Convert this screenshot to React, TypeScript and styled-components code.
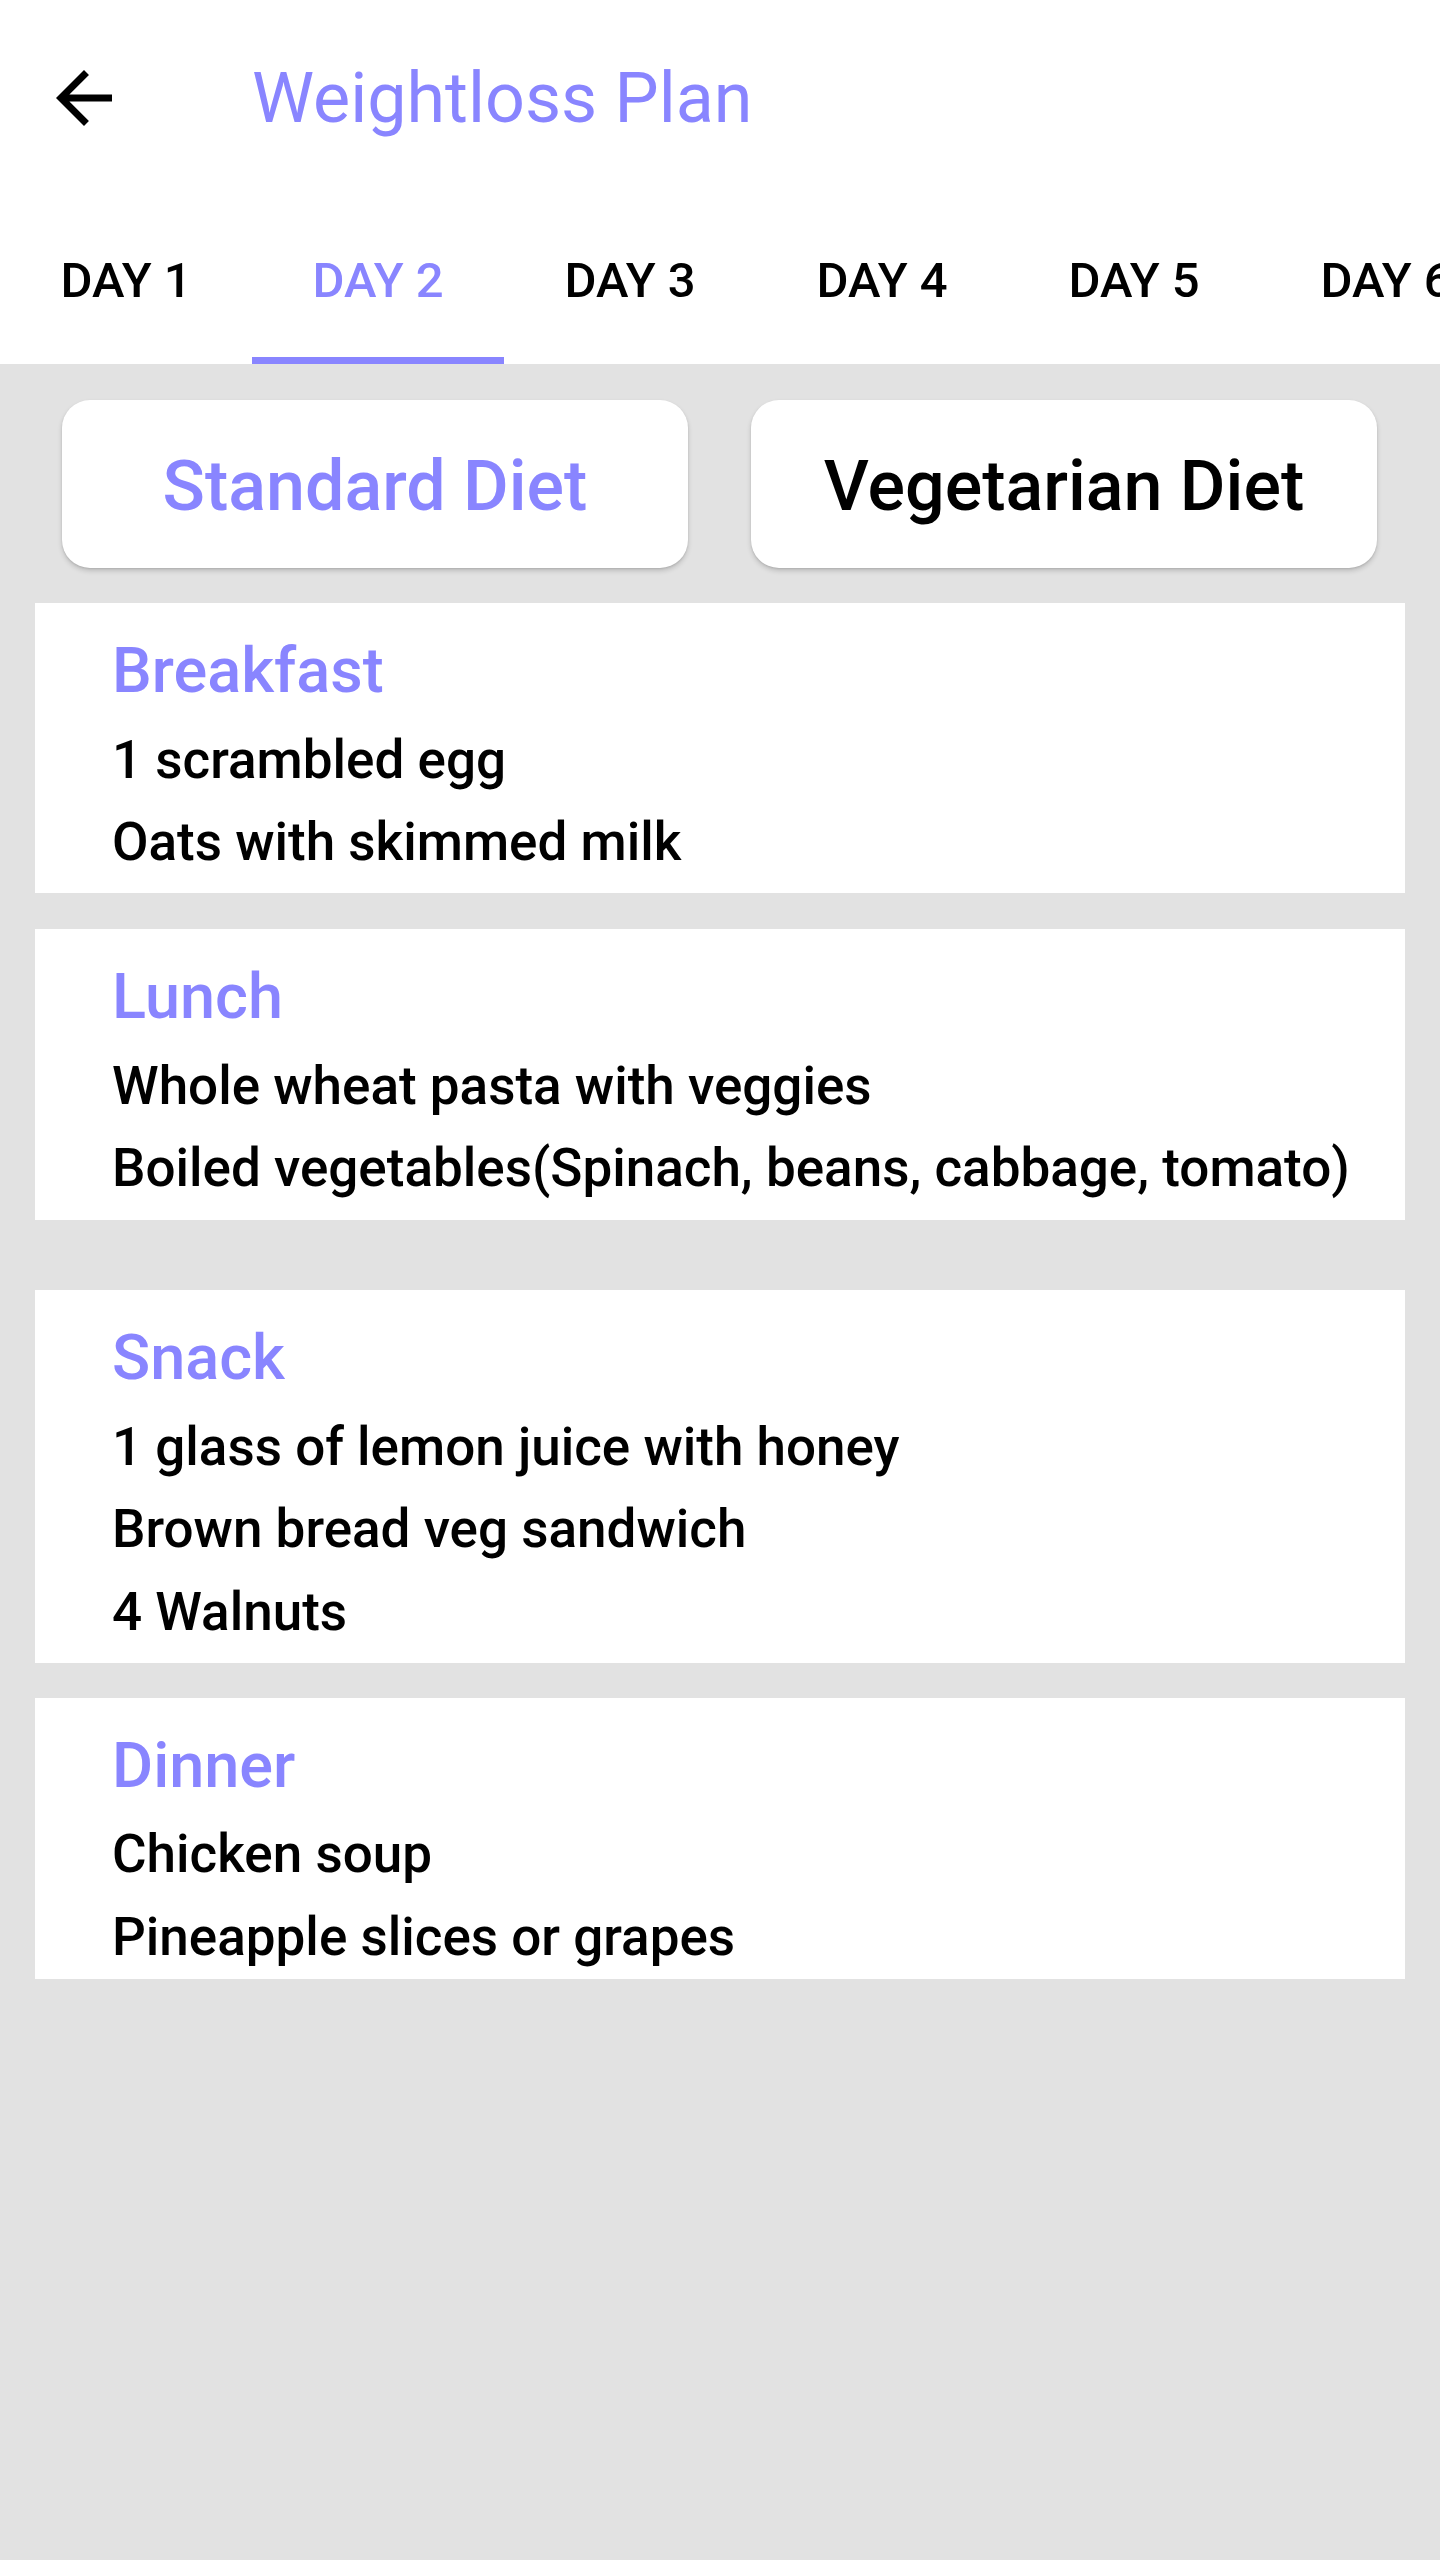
import React, { useState } from 'react';
import styled, { createGlobalStyle } from 'styled-components';

const PURPLE = '#8985ff';
const GREY = '#e2e2e2';

const GlobalStyle = createGlobalStyle`
  html, body {
    margin: 0;
    padding: 0;
    background: ${GREY};
    font-family: Roboto, "Noto Sans", "Liberation Sans", sans-serif;
  }
  * { box-sizing: border-box; }
`;

const DAYS = ['DAY 1', 'DAY 2', 'DAY 3', 'DAY 4', 'DAY 5', 'DAY 6', 'DAY 7'];

const MEALS = [
  { name: 'Breakfast', items: ['1 scrambled egg', 'Oats with skimmed milk'], gap: 35, tail: 20 },
  {
    name: 'Lunch',
    items: ['Whole wheat pasta with veggies', 'Boiled vegetables(Spinach, beans, cabbage, tomato)'],
    gap: 36,
    tail: 21,
  },
  {
    name: 'Snack',
    items: ['1 glass of lemon juice with honey', 'Brown bread veg sandwich', '4 Walnuts'],
    gap: 70,
    tail: 20,
  },
  { name: 'Dinner', items: ['Chicken soup', 'Pineapple slices or grapes'], gap: 35, tail: 11 },
];

const DietPlan = () => {
  const [day, setDay] = useState<number>(1);
  const [diet, setDiet] = useState<'standard' | 'veg'>('standard');

  return (
    <Page>
      <GlobalStyle />
      <TopBar>
        <Toolbar>
          <BackButton type="button" aria-label="Back">
            <svg width="84" height="84" viewBox="0 0 24 24">
              <path d="M20 11H7.83l5.59-5.59L12 4l-8 8 8 8 1.41-1.41L7.83 13H20v-2z" fill="#000" />
            </svg>
          </BackButton>
          <Title>Weightloss Plan</Title>
        </Toolbar>
        <TabStrip>
          {DAYS.map((label, i) => (
            <Tab key={label} type="button" $active={i === day} onClick={() => setDay(i)}>
              {label}
            </Tab>
          ))}
        </TabStrip>
      </TopBar>

      <DietRow>
        <DietButton type="button" $active={diet === 'standard'} onClick={() => setDiet('standard')}>
          Standard Diet
        </DietButton>
        <DietButton type="button" $active={diet === 'veg'} onClick={() => setDiet('veg')}>
          Vegetarian Diet
        </DietButton>
      </DietRow>

      <MealList>
        {MEALS.map((meal) => (
          <MealCard key={meal.name} $gap={meal.gap} $tail={meal.tail}>
            <MealTitle>{meal.name}</MealTitle>
            {meal.items.map((item) => (
              <MealItem key={item}>{item}</MealItem>
            ))}
          </MealCard>
        ))}
      </MealList>
    </Page>
  );
};

export default DietPlan;

const Page = styled.div`
  width: 1440px;
  min-height: 2560px;
  background: ${GREY};
  overflow: hidden;
`;

const TopBar = styled.header`
  background: #fff;
`;

const Toolbar = styled.div`
  height: 196px;
  display: flex;
  align-items: center;
  padding-left: 42px;
`;

const BackButton = styled.button`
  width: 84px;
  height: 84px;
  padding: 0;
  border: none;
  background: none;
  display: flex;
  align-items: center;
  justify-content: center;
`;

const Title = styled.h1`
  margin: 0 0 0 126px;
  font-size: 70px;
  font-weight: 400;
  color: ${PURPLE};
  line-height: 1;
`;

const TabStrip = styled.nav`
  display: flex;
  height: 168px;
  overflow: hidden;
`;

const Tab = styled.button<{ $active?: boolean }>`
  flex: 0 0 252px;
  height: 168px;
  border: none;
  background: none;
  padding: 7px 0 0;
  font-family: Roboto, sans-serif;
  font-size: 49px;
  font-weight: 500;
  white-space: nowrap;
  color: ${(p) => (p.$active ? PURPLE : '#000')};
  border-bottom: 7px solid ${(p) => (p.$active ? PURPLE : 'transparent')};
`;

const DietRow = styled.div`
  display: flex;
  gap: 63px;
  padding: 36px 63px 0 62px;
`;

const DietButton = styled.button<{ $active?: boolean }>`
  flex: 1;
  height: 168px;
  border: none;
  border-radius: 28px;
  background: #fff;
  box-shadow: 0 3px 5px rgba(0, 0, 0, 0.16), 0 1px 2px rgba(0, 0, 0, 0.1);
  font-family: Roboto, sans-serif;
  font-size: 70px;
  font-weight: 500;
  color: ${(p) => (p.$active ? PURPLE : '#000')};
  padding: 4px 0 0;
`;

const MealList = styled.main`
  display: flex;
  flex-direction: column;
  padding: 0 35px;
`;

const MealCard = styled.section<{ $gap: number; $tail: number }>`
  background: #fff;
  margin-top: ${(p) => p.$gap}px;
  padding: 31px 20px ${(p) => p.$tail}px 77px;
`;

const MealTitle = styled.h2`
  margin: 0;
  font-size: 63px;
  font-weight: 500;
  color: ${PURPLE};
  line-height: 74px;
`;

const MealItem = styled.p`
  margin: 20.5px 0 0;
  font-size: 53px;
  font-weight: 500;
  color: #000;
  line-height: 62px;
  white-space: nowrap;
`;
